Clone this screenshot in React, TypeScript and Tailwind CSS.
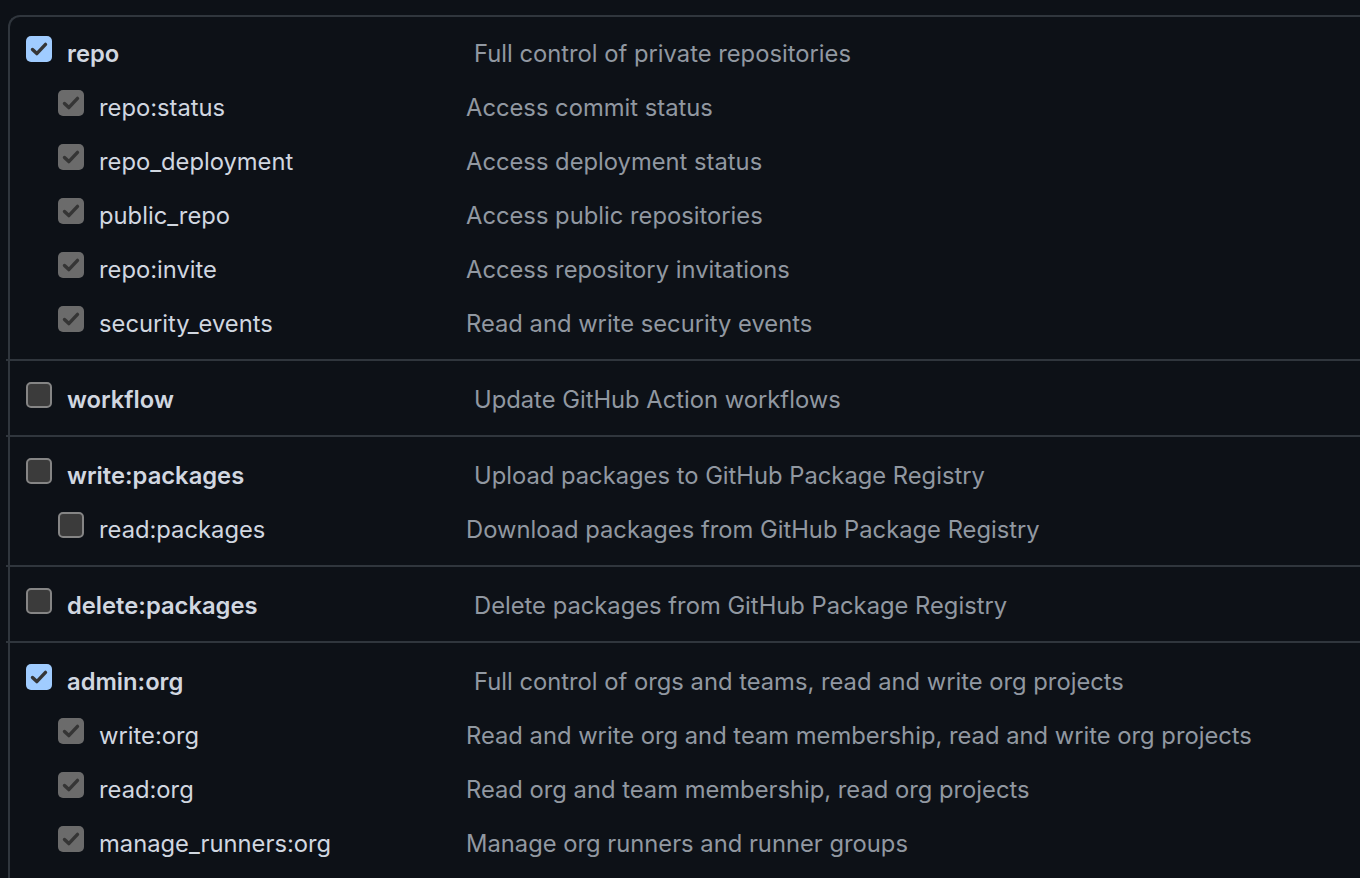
type Scope = {
  name: string;
  desc: string;
  checked: boolean;
  subs?: { name: string; desc: string; checked: boolean }[];
};

const scopes: Scope[] = [
  {
    name: "repo",
    desc: "Full control of private repositories",
    checked: true,
    subs: [
      { name: "repo:status", desc: "Access commit status", checked: true },
      { name: "repo_deployment", desc: "Access deployment status", checked: true },
      { name: "public_repo", desc: "Access public repositories", checked: true },
      { name: "repo:invite", desc: "Access repository invitations", checked: true },
      { name: "security_events", desc: "Read and write security events", checked: true },
    ],
  },
  { name: "workflow", desc: "Update GitHub Action workflows", checked: false },
  {
    name: "write:packages",
    desc: "Upload packages to GitHub Package Registry",
    checked: false,
    subs: [
      { name: "read:packages", desc: "Download packages from GitHub Package Registry", checked: false },
    ],
  },
  { name: "delete:packages", desc: "Delete packages from GitHub Package Registry", checked: false },
  {
    name: "admin:org",
    desc: "Full control of orgs and teams, read and write org projects",
    checked: true,
    subs: [
      { name: "write:org", desc: "Read and write org and team membership, read and write org projects", checked: true },
      { name: "read:org", desc: "Read org and team membership, read org projects", checked: true },
      { name: "manage_runners:org", desc: "Manage org runners and runner groups", checked: true },
    ],
  },
];

function Check() {
  return (
    <svg width="26" height="26" viewBox="0 0 26 26" fill="none">
      <path
        d="M6.5 13.5 L10.8 17.6 L19.5 8.4"
        stroke="#353535"
        strokeWidth="3.4"
        strokeLinecap="round"
        strokeLinejoin="round"
      />
    </svg>
  );
}

function Box({ checked, sub }: { checked: boolean; sub?: boolean }) {
  if (!checked) {
    return (
      <div className="h-[26px] w-[26px] shrink-0 rounded-[5px] border-2 border-[#858585] bg-[#3b3b3b]" />
    );
  }
  return (
    <div
      className={
        sub
          ? "h-[26px] w-[26px] shrink-0 rounded-[5px] bg-[#6b6b6b]"
          : "h-[26px] w-[26px] shrink-0 rounded-[5px] bg-[#a0ccff]"
      }
    >
      <Check />
    </div>
  );
}

export default function App() {
  return (
    <div
      className="h-[878px] w-[1360px] overflow-hidden bg-[#0d1117] pt-[15px] pl-[8px]"
      style={{ fontFamily: "Inter, 'Noto Sans', sans-serif" }}
    >
      <div className="w-[1500px] rounded-tl-[12px] border-l-2 border-t-2 border-[#30363d]">
        {scopes.map((s, i) => (
          <div key={s.name}>
            {i > 0 && <div className="-ml-[4px] h-[2px] bg-[#30363d]" />}
            <div className={i === 0 ? "pt-[10px] pb-[8px]" : "pt-[12px] pb-[8px]"}>
              <div className="flex h-[54px] items-center pl-[16px]">
                <div className="-mt-[10px]">
                  <Box checked={s.checked} />
                </div>
                <div className="ml-[15px] w-[407px] text-[23.75px] font-semibold text-[#d1d7e0]">
                  {s.name}
                </div>
                <div className="text-[23.75px] text-[#9198a1]">{s.desc}</div>
              </div>
              {s.subs?.map((c) => (
                <div key={c.name} className="flex h-[54px] items-center pl-[48px]">
                  <div className="-mt-[10px]">
                    <Box checked={c.checked} sub />
                  </div>
                  <div className="ml-[15px] w-[367px] text-[23.75px] text-[#d1d7e0]">{c.name}</div>
                  <div className="text-[23.75px] text-[#9198a1]">{c.desc}</div>
                </div>
              ))}
            </div>
          </div>
        ))}
      </div>
    </div>
  );
}
